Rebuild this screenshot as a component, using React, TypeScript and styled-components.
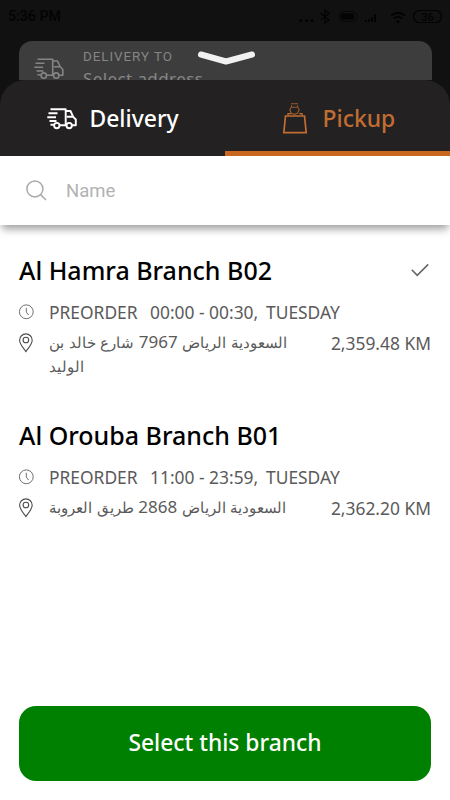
import React from "react";
import styled, { createGlobalStyle } from "styled-components";

const GlobalStyle = createGlobalStyle`
  * { box-sizing: border-box; }
  body { margin: 0; background: #fff; font-family: "Noto Sans", "Open Sans", sans-serif; }
  svg { display: block; flex: none; }
`;

const Screen = styled.main`
  width: 450px;
  height: 800px;
  overflow: hidden;
  display: flex;
  flex-direction: column;
  background: #fff;
`;

const Backdrop = styled.div`
  position: relative;
  height: 80px;
  flex: none;
  background: #111;
`;

const StatusBar = styled.div`
  height: 41px;
  padding: 7px 8px 0;
  display: flex;
  justify-content: space-between;
  align-items: flex-start;
  color: #030303;
  font: 500 14.2px/18px Roboto, sans-serif;
`;

const AddressCard = styled.div`
  margin: 0 18px 0 19px;
  height: 39px;
  padding: 8px 0 0 15px;
  display: flex;
  gap: 19px;
  overflow: hidden;
  border-radius: 13px 13px 0 0;
  background: #3d3d3d;
  color: #858585;
`;

const TruckSlot = styled.div`
  padding-top: 9px;
`;

const AddressLabel = styled.div`
  font: 400 13.4px/16px Roboto, sans-serif;
  letter-spacing: 0.95px;
`;

const AddressValue = styled.div`
  margin-top: 2px;
  font-size: 17px;
  line-height: 24px;
  letter-spacing: 0.4px;
`;

const DragHandle = styled.div`
  position: absolute;
  left: 196px;
  top: 48px;
`;

const TabsArea = styled.div`
  height: 76px;
  flex: none;
  background: #111;
`;

const Tabs = styled.div`
  height: 76px;
  display: flex;
  border-radius: 25px 25px 0 0;
  background: #232122;
`;

const Tab = styled.button<{ $active?: boolean }>`
  width: 225px;
  height: 76px;
  padding: 0 0 0 ${(p) => (p.$active ? 57 : 47)}px;
  border: 0;
  border-bottom: 5px solid ${(p) => (p.$active ? "#c9661f" : "transparent")};
  display: flex;
  align-items: center;
  gap: ${(p) => (p.$active ? 14.5 : 12.5)}px;
  background: none;
  color: ${(p) => (p.$active ? "#c16d32" : "#fff")};
  font: 500 22.9px/30px "Noto Sans", sans-serif;
`;

const TabLabel = styled.span`
  padding-top: 7px;
`;

const IconNudge = styled.span`
  padding-top: 6px;
`;

const SearchBar = styled.label`
  position: relative;
  z-index: 1;
  height: 69px;
  flex: none;
  padding-left: 26px;
  display: flex;
  align-items: center;
  gap: 19px;
  background: #fff;
  box-shadow: 0 6px 8px -2px rgba(0, 0, 0, 0.38);
`;

const SearchInput = styled.input`
  width: 300px;
  padding: 0;
  border: 0;
  outline: 0;
  background: none;
  font: 400 18.5px/24px Roboto, sans-serif;
  &::placeholder { color: #b2b2b2; opacity: 1; }
`;

const BranchList = styled.div`
  flex: 1;
  padding: 27px 19px 0 19px;
`;

const Branch = styled.section`
  height: 165px;
`;

const BranchHeader = styled.div`
  height: 36px;
  display: flex;
  justify-content: space-between;
  align-items: center;
`;

const BranchName = styled.h2`
  margin: 0;
  color: #000;
  font-size: 25px;
  line-height: 36px;
  font-weight: 500;
  white-space: nowrap;
`;

const InfoRow = styled.div<{ $top: number }>`
  display: flex;
  align-items: flex-start;
  margin-top: ${(p) => p.$top}px;
  color: #5a5a5a;
  font-size: 17.4px;
  line-height: 24px;
`;

const IconSlot = styled.div<{ $top: number }>`
  width: 30px;
  flex: none;
  padding-top: ${(p) => p.$top}px;
`;

const Hours = styled.div`
  display: flex;
  white-space: nowrap;
`;

const HoursPart = styled.span<{ $width?: number }>`
  width: ${(p) => (p.$width ? `${p.$width}px` : "auto")};
`;

const Address = styled.div`
  width: 254px;
  padding-top: 1px;
  font-size: 15.4px;
  line-height: 24px;
  word-spacing: 0.6px;
`;

const StreetNumber = styled.span`
  font-size: 17px;
  line-height: 1;
`;

const Distance = styled.div`
  margin-left: auto;
  padding-top: 1px;
  white-space: nowrap;
`;

const Footer = styled.footer`
  padding: 0 19px 19px;
`;

const SelectButton = styled.button`
  display: block;
  width: 412px;
  height: 75px;
  padding: 0 0 1px;
  border: 0;
  border-radius: 17px;
  background: #008000;
  color: #fff;
  font: 500 22.8px/30px "Noto Sans", sans-serif;
`;

const Truck = ({ weight = 1.6 }: { weight?: number }) => (
  <svg width="30" height="22" viewBox="0 0 30 22" fill="none" stroke="currentColor" strokeWidth={weight} strokeLinejoin="round">
    <path d="M3.5 1.3H18.7V16.5M1.5 5.2H10.5M.3 9.2H9M2.5 13H9.5M3.5 16.8H6.8M12.7 17.3H19.2" />
    <path d="M18.7 3H23.5L26.2 8.8L28.8 11.5V17.3H25M19.6 8.8H26" />
    <circle cx="9.8" cy="17.6" r="2.7" />
    <circle cx="22.2" cy="17.6" r="2.7" />
  </svg>
);

const Bag = () => (
  <svg width="26" height="32" viewBox="0 0 26 32" fill="none" stroke="currentColor">
    <path strokeWidth="1.7" d="M3.5 13H22.5L24.2 29.7H1.8Z" />
    <path strokeWidth="1.3" d="M6 12.5V10.6H9.2M17.2 10.6H20V12.5" />
    <path strokeWidth="1.1" opacity=".75" d="M9 .8H16M9.5 2.2V4L7.8 6.8L9.3 10.2L12.4 11.3L15.5 10.2L17.2 6.8L15.6 4V2.2M10 4.2H15" />
  </svg>
);

const StatusIcons = () => (
  <svg width="144" height="20" viewBox="299 6 144 20" fill="none" stroke="currentColor" strokeWidth="1.2">
    <g fill="currentColor" stroke="none">
      <circle cx="302" cy="19.5" r="1.5" /><circle cx="307.5" cy="19.5" r="1.5" /><circle cx="313" cy="19.5" r="1.5" />
      <rect x="341.5" y="12.5" width="14" height="6" rx="3" />
      <path d="M366 21v-2h2v2zM369 21v-3h2v3zM372 21v-5h2v5zM375 21v-8h2v8z" />
      <circle cx="399" cy="20.5" r="1.5" />
    </g>
    <path d="M321.5 12L330 19L326 22V9L330 12.5L321.5 19" />
    <rect x="340" y="10.5" width="18" height="10" rx="5" strokeWidth=".7" />
    <path d="M392 14.5Q399 9 406 14.5M395 17.5Q399 14 403 17.5" strokeWidth="1.8" />
    <rect x="414.5" y="9.5" width="28" height="12" rx="6" strokeWidth="1.2" />
    <text x="428.5" y="19.5" textAnchor="middle" fill="currentColor" stroke="none" fontFamily="Roboto" fontSize="11">36</text>
  </svg>
);

const Clock = () => (
  <svg width="15" height="16" viewBox="0 0 15 16" fill="none" stroke="#606060" strokeWidth=".9">
    <circle cx="7.3" cy="7.8" r="6.9" />
    <path d="M7.3 3.8V8.2L9.6 11" />
  </svg>
);

const Pin = () => (
  <svg width="15" height="20" viewBox="0 0 15 20" fill="none" stroke="#4c4c4c" strokeWidth="1.1">
    <path d="M6.9 18.6C5.2 16 .6 11.3 .6 7.2a6.3 6.3 0 0 1 12.6 0C13.2 11.3 8.6 16 6.9 18.6Z" />
    <circle cx="6.9" cy="7" r="2.8" />
  </svg>
);

const Check = () => (
  <svg width="20" height="16" viewBox="0 0 20 16" fill="none" stroke="#666" strokeWidth="1.6">
    <path d="M.8 7.8L6.2 13.3L17.2 2.4" />
  </svg>
);

interface BranchData {
  name: string;
  hours: string;
  city: string;
  streetNumber: string;
  street: string;
  distance: string;
  selected?: boolean;
}

const branches: BranchData[] = [
  { name: "Al Hamra Branch B02", hours: "00:00 - 00:30,", city: "السعودية الرياض", streetNumber: "7967", street: "شارع خالد بن الوليد", distance: "2,359.48 KM", selected: true },
  { name: "Al Orouba Branch B01", hours: "11:00 - 23:59,", city: "السعودية الرياض", streetNumber: "2868", street: "طريق العروبة", distance: "2,362.20 KM" },
];

export default function App() {
  return (
    <Screen>
      <GlobalStyle />
      <Backdrop>
        <StatusBar>
          <span>5:36 PM</span>
          <StatusIcons />
        </StatusBar>
        <AddressCard>
          <TruckSlot><Truck /></TruckSlot>
          <div>
            <AddressLabel>DELIVERY TO</AddressLabel>
            <AddressValue>Select address</AddressValue>
          </div>
        </AddressCard>
        <DragHandle>
          <svg width="61" height="20" viewBox="0 0 61 20" fill="none" stroke="#f2f2f2" strokeWidth="6" strokeLinecap="round" strokeLinejoin="round">
            <path d="M5 6.5L30 13.5L56 6.5" />
          </svg>
        </DragHandle>
      </Backdrop>
      <TabsArea>
        <Tabs>
          <Tab><IconNudge><Truck weight={1.9} /></IconNudge><TabLabel>Delivery</TabLabel></Tab>
          <Tab $active><IconNudge><Bag /></IconNudge><TabLabel>Pickup</TabLabel></Tab>
        </Tabs>
      </TabsArea>
      <SearchBar>
        <svg width="21" height="21" viewBox="0 0 21 21" fill="none" stroke="#a9a9a9" strokeWidth="1.5">
          <circle cx="8.9" cy="8.9" r="8" />
          <path d="M14.6 14.6L20 20" />
        </svg>
        <SearchInput placeholder="Name" />
      </SearchBar>
      <BranchList>
        {branches.map((b) => (
          <Branch key={b.name}>
            <BranchHeader>
              <BranchName>{b.name}</BranchName>
              {b.selected && <Check />}
            </BranchHeader>
            <InfoRow $top={12}>
              <IconSlot $top={4}><Clock /></IconSlot>
              <Hours>
                <HoursPart $width={101}>PREORDER</HoursPart>
                <HoursPart $width={116}>{b.hours}</HoursPart>
                <HoursPart>TUESDAY</HoursPart>
              </Hours>
            </InfoRow>
            <InfoRow $top={6}>
              <IconSlot $top={3}><Pin /></IconSlot>
              <Address>
                {b.city} <StreetNumber>{b.streetNumber}</StreetNumber> {b.street}
              </Address>
              <Distance>{b.distance}</Distance>
            </InfoRow>
          </Branch>
        ))}
      </BranchList>
      <Footer>
        <SelectButton>Select this branch</SelectButton>
      </Footer>
    </Screen>
  );
}
